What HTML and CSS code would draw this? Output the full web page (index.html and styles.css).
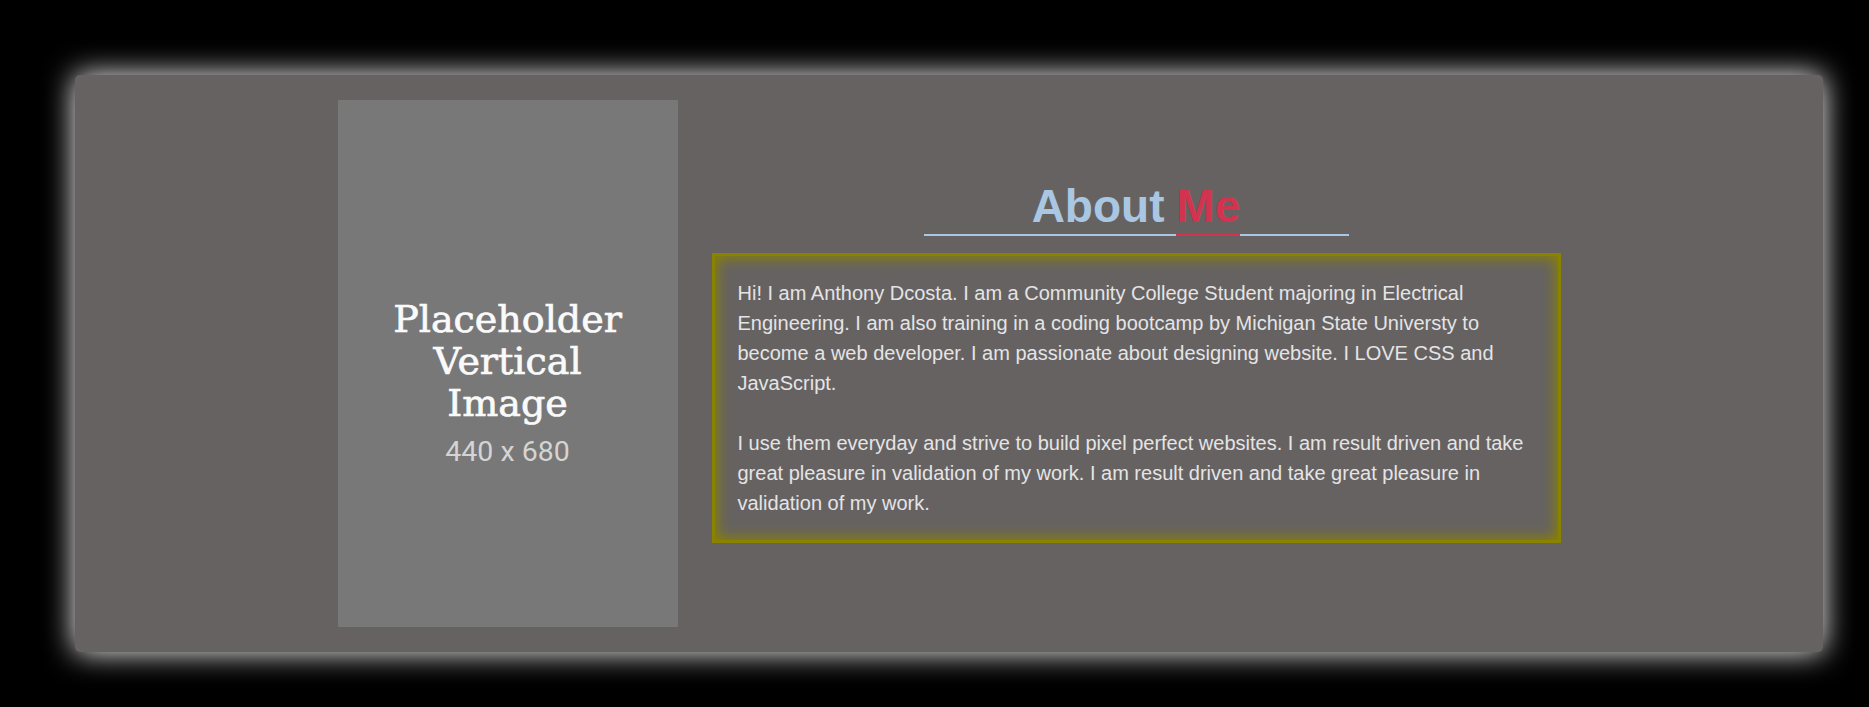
FILE: index.html
```html
<!DOCTYPE html>
<html lang="en">
<head>
<meta charset="utf-8">
<title>About Me</title>
<link rel="stylesheet" href="styles.css">
</head>
<body>
  <div class="page">
    <section class="card">
      <div class="placeholder">
        <div class="ph-title">Placeholder<br>Vertical<br>Image</div>
        <div class="ph-dims">440 x 680</div>
      </div>
      <div class="about">
        <h2 class="title"><span class="title-about">About</span><span class="title-me">Me</span></h2>
        <div class="text-box">
          <p class="text">Hi! I am Anthony Dcosta. I am a Community College Student majoring in Electrical Engineering. I am also training in a coding bootcamp by Michigan State Universty to become a web developer. I am passionate about designing website. I LOVE CSS and JavaScript.<br><br>I use them everyday and strive to build pixel perfect websites. I am result driven and take great pleasure in validation of my work. I am result driven and take great pleasure in validation of my work.</p>
        </div>
      </div>
    </section>
  </div>
</body>
</html>
```

FILE: styles.css
```css
html, body {
  margin: 0;
  padding: 0;
  background: #000;
}

.page {
  padding: 75px 46px 55px 75px;
}

.card {
  box-sizing: border-box;
  width: 1748px;
  height: 577px;
  background: #666261;
  border-radius: 5px;
  box-shadow: 0 0 30px #fff;
  display: flex;
  justify-content: center;
  align-items: center;
  gap: 34px;
}

.placeholder {
  box-sizing: border-box;
  width: 340px;
  height: 527px;
  background: #787878;
  display: flex;
  flex-direction: column;
  justify-content: center;
  align-items: center;
  padding-top: 44px;
  text-align: center;
}

.ph-title {
  font-family: "DejaVu Serif", serif;
  font-size: 38px;
  line-height: 42px;
  color: #fafafa;
  -webkit-text-stroke: 0.7px #fafafa;
}

.ph-dims {
  margin-top: 7px;
  font-family: Roboto, "Liberation Sans", sans-serif;
  font-size: 28.5px;
  line-height: 42px;
  color: #d4d4d4;
}

.about {
  width: 849px;
  display: flex;
  flex-direction: column;
  align-items: center;
}

.title {
  width: 425px;
  margin: 0 0 17px;
  display: flex;
  justify-content: center;
  align-items: flex-end;
  gap: 12px;
  border-bottom: 2px solid #a9c7e3;
  font-family: "Liberation Sans", Arial, sans-serif;
  font-weight: bold;
  font-size: 46px;
  line-height: 45px;
}

.title-about {
  color: #a9c7e3;
  padding-bottom: 5px;
}

.title-me {
  color: #d2334f;
  padding-bottom: 5px;
  border-bottom: 2px solid #d2334f;
  margin-bottom: -2px;
}

.text-box {
  box-sizing: border-box;
  width: 849px;
  border: 3px solid #8a8300;
  box-shadow: inset 0 0 14px 2px #8a8300;
  padding: 22px 33px 22px 23px;
}

.text {
  margin: 0;
  font-family: "Liberation Sans", Arial, sans-serif;
  font-size: 20px;
  line-height: 30px;
  color: #e4e4e6;
}
```
